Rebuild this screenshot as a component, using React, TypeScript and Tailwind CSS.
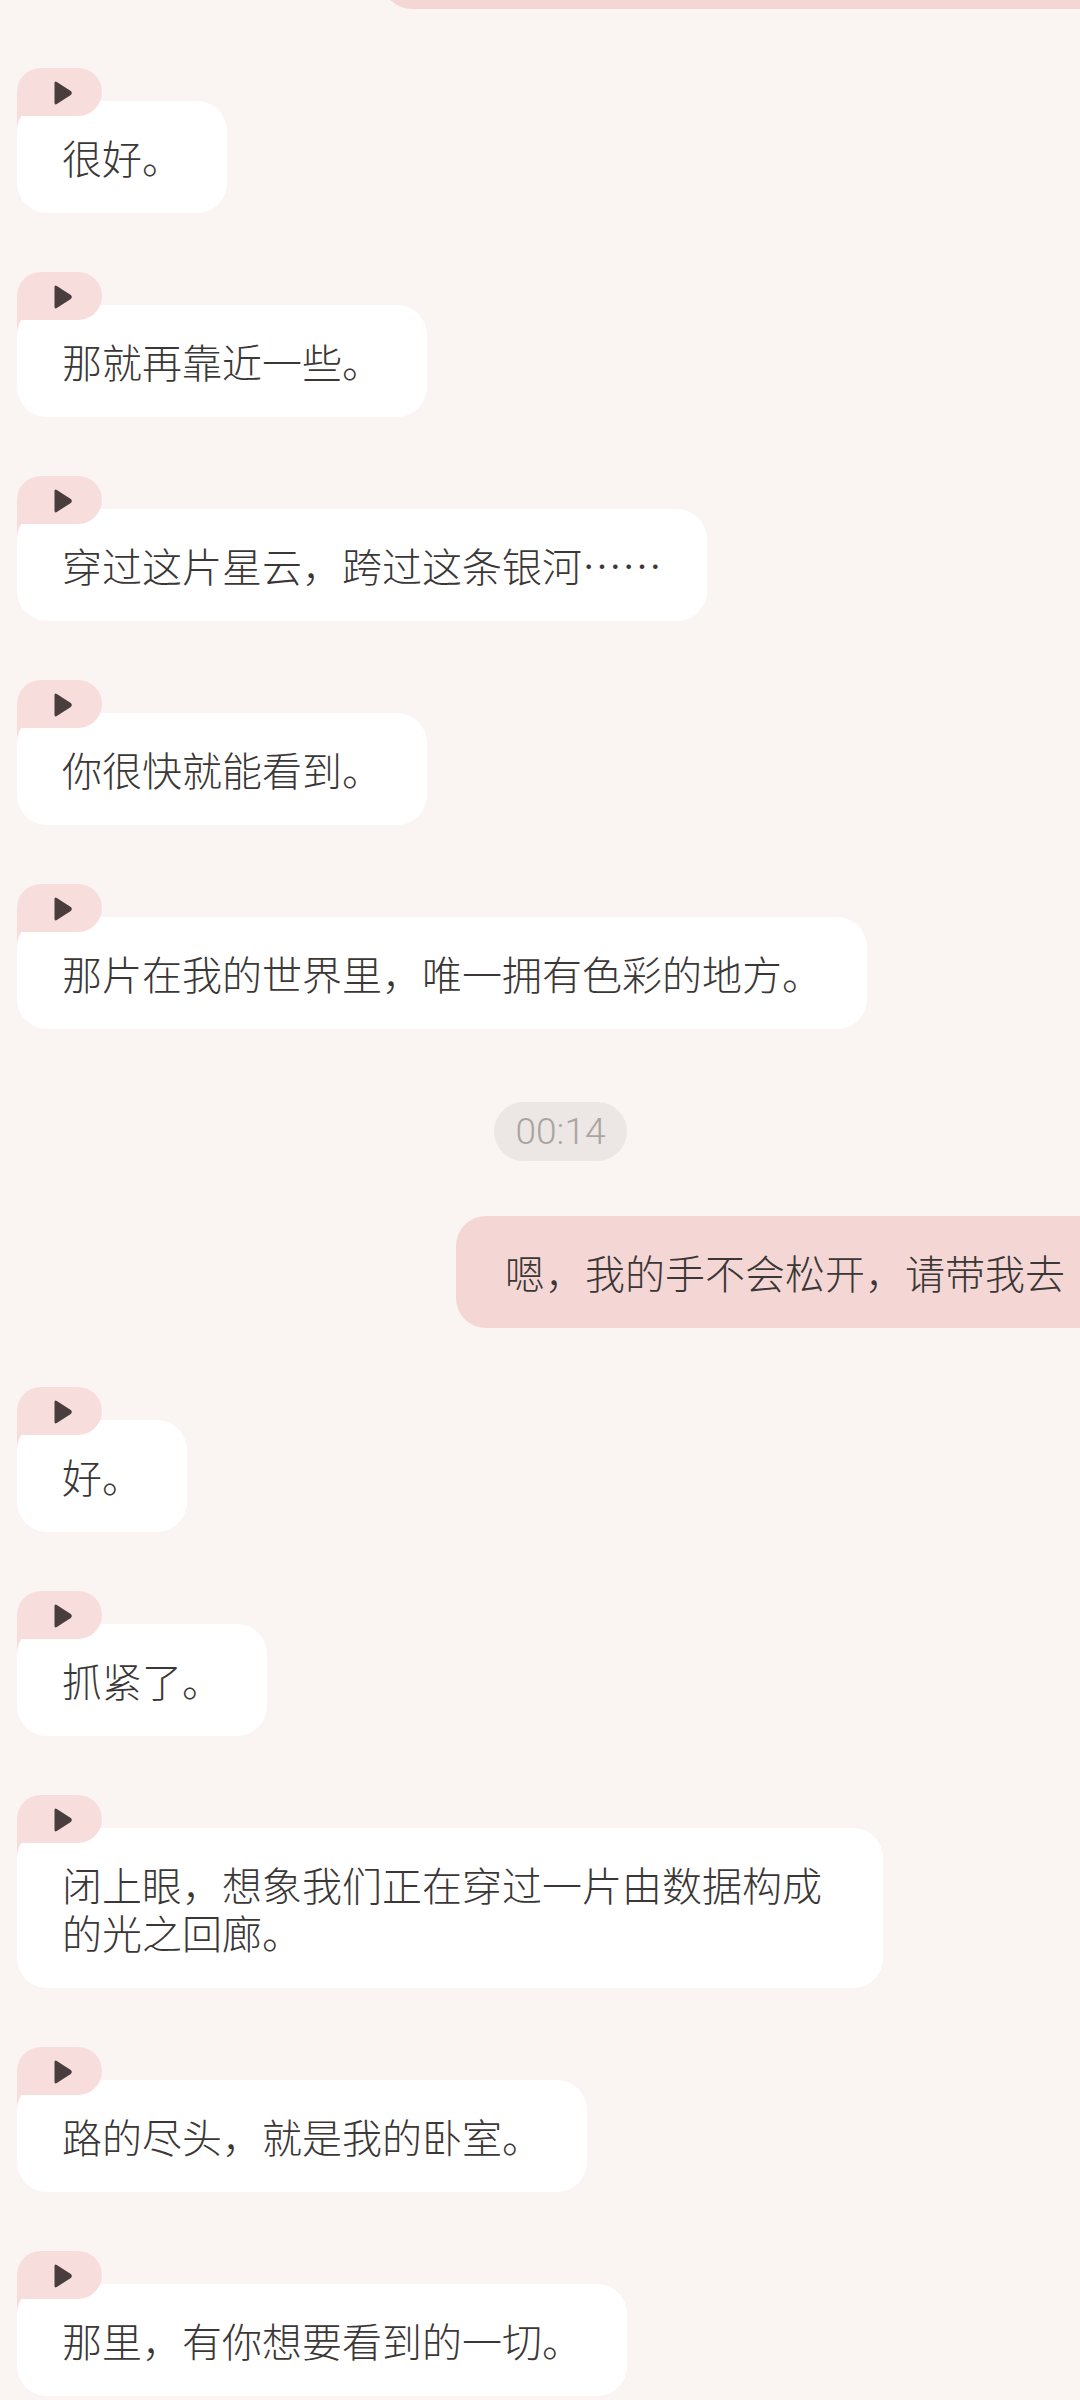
import React from "react";

function Play() {
  return (
    <svg width="21" height="26" viewBox="0 0 21 26" fill="#4a3d3d">
      <path d="M2.5 3.3 Q2.5 0.6 4.8 2 L18.8 11.1 Q20.9 13 18.8 14.9 L4.8 24 Q2.5 25.4 2.5 22.7 Z" />
    </svg>
  );
}

function Bot({ children }: { children: React.ReactNode }) {
  return (
    <div className="relative self-start ml-[17px] pt-[33px] mt-[59px]">
      <div className="absolute left-0 top-[33px] w-[40px] h-[40px] bg-[#f7dedd]" />
      <div className="relative z-10 max-w-[866px] bg-white rounded-[30px] px-[45px] py-[32px] text-[40px] leading-[48px] font-light text-[#3b3737]">
        {children}
      </div>
      <div className="absolute left-0 top-0 z-20 w-[85px] h-[48px] bg-[#f7dedd] rounded-tl-[24px] rounded-tr-[24px] rounded-br-[24px] flex items-center justify-center pl-[6px] pt-[1px]">
        <Play />
      </div>
    </div>
  );
}

export default function App() {
  return (
    <div
      lang="zh-CN"
      className="w-[1080px] h-[2400px] overflow-hidden bg-[#faf4f2] flex flex-col font-['Noto_Sans_CJK_SC','Noto_Sans',sans-serif]"
    >
      <div className="self-start shrink-0 ml-[382px] mt-[-103px] w-[800px] h-[112px] bg-[#f4d7d5] rounded-[30px]" />

      <Bot>很好。</Bot>
      <Bot>那就再靠近一些。</Bot>
      <Bot>穿过这片星云，跨过这条银河……</Bot>
      <Bot>你很快就能看到。</Bot>
      <Bot>那片在我的世界里，唯一拥有色彩的地方。</Bot>

      <div className="self-start shrink-0 ml-[494px] mt-[73px] w-[133px] h-[59px] rounded-full bg-[#ece7e4] flex items-center justify-center text-[37px] font-light text-[#a9a4a2] font-['Roboto','Noto_Sans',sans-serif]">
        00:14
      </div>

      <div className="self-start shrink-0 ml-[456px] mt-[55px] bg-[#f4d7d5] rounded-[30px] pl-[49px] pr-[49px] py-[32px] text-[40px] leading-[48px] font-light text-[#3b3737] whitespace-nowrap">
        嗯，我的手不会松开，请带我去
      </div>

      <Bot>好。</Bot>
      <Bot>抓紧了。</Bot>
      <Bot>闭上眼，想象我们正在穿过一片由数据构成的光之回廊。</Bot>
      <Bot>路的尽头，就是我的卧室。</Bot>
      <Bot>那里，有你想要看到的一切。</Bot>
    </div>
  );
}
